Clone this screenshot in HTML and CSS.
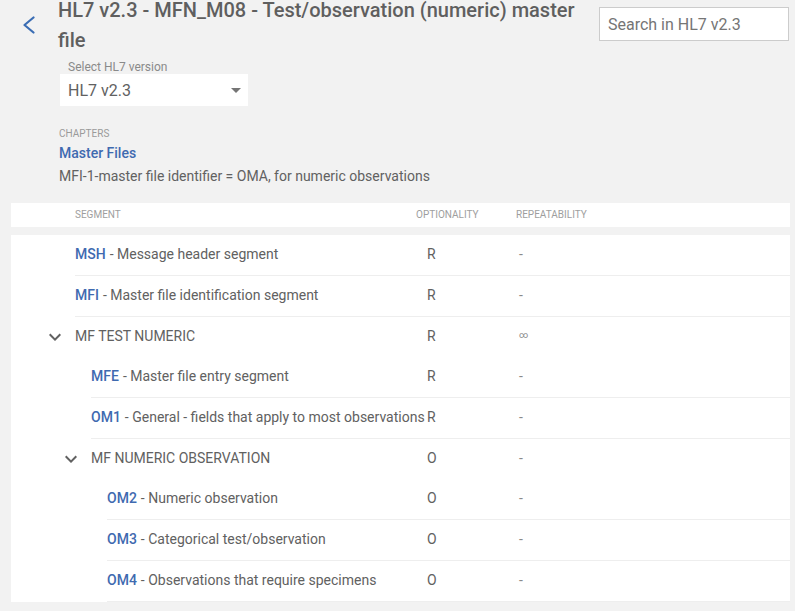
FILE: index.html
```html
<!DOCTYPE html>
<html lang="en">
<head>
<meta charset="utf-8">
<title>HL7 v2.3 - MFN_M08</title>
<link rel="stylesheet" href="styles.css">
</head>
<body>
<div class="page">
  <header class="top">
    <a class="back" href="#" aria-label="Back">
      <svg width="14" height="18" viewBox="0 0 14 18"><polyline points="11.5,1.5 2.5,9 11.5,16.5" fill="none" stroke="#3a6db4" stroke-width="2.2" stroke-linecap="round" stroke-linejoin="round"/></svg>
    </a>
    <div class="main">
      <h1 class="title">HL7 v2.3 - MFN_M08 - Test/observation (numeric) master file</h1>
      <div class="field">
        <div class="field-label">Select HL7 version</div>
        <div class="select"><span>HL7 v2.3</span><span class="caret"></span></div>
      </div>
      <div class="chapters">
        <div class="ch-label">CHAPTERS</div>
        <a class="ch-link" href="#">Master Files</a>
        <p class="desc">MFI-1-master file identifier = OMA, for numeric observations</p>
      </div>
    </div>
    <input class="search" type="text" placeholder="Search in HL7 v2.3">
  </header>

  <section class="table">
    <div class="thead">
      <div class="th seg-h">Segment</div>
      <div class="th opt-h">Optionality</div>
      <div class="th rep-h">Repeatability</div>
    </div>
    <div class="tbody">
      <div class="row leaf l0">
        <div class="seg"><a class="code" href="#">MSH</a> - Message header segment</div>
        <div class="opt">R</div><div class="rep">-</div>
      </div>
      <div class="row leaf l0">
        <div class="seg"><a class="code" href="#">MFI</a> - Master file identification segment</div>
        <div class="opt">R</div><div class="rep">-</div>
      </div>
      <div class="row group g0">
        <div class="seg"><svg class="exp" width="24" height="24" viewBox="0 0 24 24"><path d="M16.59 8.59L12 13.17 7.41 8.59 6 10l6 6 6-6z"/></svg>MF TEST NUMERIC</div>
        <div class="opt">R</div><div class="rep inf">∞</div>
      </div>
      <div class="row leaf l1">
        <div class="seg"><a class="code" href="#">MFE</a> - Master file entry segment</div>
        <div class="opt">R</div><div class="rep">-</div>
      </div>
      <div class="row leaf l1">
        <div class="seg"><a class="code" href="#">OM1</a> - General - fields that apply to most observations</div>
        <div class="opt">R</div><div class="rep">-</div>
      </div>
      <div class="row group g1">
        <div class="seg"><svg class="exp" width="24" height="24" viewBox="0 0 24 24"><path d="M16.59 8.59L12 13.17 7.41 8.59 6 10l6 6 6-6z"/></svg>MF NUMERIC OBSERVATION</div>
        <div class="opt">O</div><div class="rep">-</div>
      </div>
      <div class="row leaf l2">
        <div class="seg"><a class="code" href="#">OM2</a> - Numeric observation</div>
        <div class="opt">O</div><div class="rep">-</div>
      </div>
      <div class="row leaf l2">
        <div class="seg"><a class="code" href="#">OM3</a> - Categorical test/observation</div>
        <div class="opt">O</div><div class="rep">-</div>
      </div>
      <div class="row leaf l2">
        <div class="seg"><a class="code" href="#">OM4</a> - Observations that require specimens</div>
        <div class="opt">O</div><div class="rep">-</div>
      </div>
    </div>
  </section>
</div>
</body>
</html>
```

FILE: styles.css
```css
html, body {
  margin: 0;
  padding: 0;
  overflow: hidden;
}
body {
  background: #f2f2f2;
  font-family: Roboto, "Liberation Sans", Arial, sans-serif;
  color: #616161;
}
a { text-decoration: none; }

.top {
  display: flex;
  align-items: flex-start;
}
.back {
  flex: none;
  width: 58px;
  display: block;
}
.back svg {
  display: block;
  margin: 16px 0 0 22px;
}
.main {
  flex: 1;
  min-width: 0;
}
.title {
  margin: -5px 0 0 0;
  font-size: 20px;
  font-weight: 500;
  line-height: 30px;
  color: #5f5f5f;
}
.field {
  margin: 5px 0 0 2px;
}
.field-label {
  font-size: 12px;
  line-height: 14px;
  color: #8a8a8a;
  padding-left: 8px;
}
.select {
  width: 188px;
  height: 32px;
  box-sizing: border-box;
  background: #fff;
  display: flex;
  align-items: center;
  justify-content: space-between;
  padding: 0 6px 0 8px;
  font-size: 16px;
  color: #616161;
}
.caret {
  width: 0;
  height: 0;
  border-left: 5px solid transparent;
  border-right: 5px solid transparent;
  border-top: 5px solid #757575;
  margin-right: 1px;
}
.chapters {
  margin-top: 22px;
  padding-left: 1px;
}
.ch-label {
  font-size: 10px;
  line-height: 12px;
  color: #9a9a9a;
}
.ch-link {
  display: block;
  margin-top: 3px;
  font-size: 14px;
  line-height: 20px;
  font-weight: 500;
  color: #3f6ab0;
}
.desc {
  margin: 3px 0 0 0;
  font-size: 14px;
  line-height: 20px;
  color: #616161;
}
.search {
  flex: none;
  box-sizing: border-box;
  width: 190px;
  height: 34px;
  margin: 7px 6px 0 10px;
  border: 1px solid #cccccc;
  background: #fff;
  padding: 0 8px;
  font-family: Roboto, "Liberation Sans", Arial, sans-serif;
  font-size: 16px;
  color: #616161;
  outline: none;
}
.search::placeholder {
  color: #757575;
  opacity: 1;
}

.table {
  margin: 17px 5px 0 11px;
}
.thead {
  display: flex;
  height: 24px;
  background: #fff;
  padding-left: 64px;
}
.th {
  font-size: 10px;
  line-height: 24px;
  color: #9e9e9e;
  text-transform: uppercase;
}
.seg-h { width: 341px; flex: none; }
.opt-h { width: 100px; flex: none; }
.rep-h { flex: 1; }

.tbody {
  margin-top: 8px;
  background: #fff;
}
.row {
  display: flex;
  height: 40px;
  margin-left: var(--start);
  font-size: 14px;
  line-height: 39px;
  padding-bottom: 1px;
  box-sizing: border-box;
  white-space: nowrap;
}
.row.leaf {
  height: 41px;
  border-bottom: 1px solid #eeeeee;
}
.l0 { --start: 64px; }
.l1 { --start: 80px; }
.l2 { --start: 96px; }
.g0 { --start: 32px; }
.g1 { --start: 48px; }

.seg {
  flex: none;
  width: calc(416px - var(--start));
  display: flex;
  align-items: center;
}
.code {
  font-weight: 500;
  color: #3f6ab0;
  margin-right: 4px;
}
.exp {
  flex: none;
  fill: #616161;
  margin-right: 8px;
  margin-top: 1px;
}
.opt {
  flex: none;
  width: 92px;
}
.rep {
  flex: 1;
  color: #8a8a8a;
}
.rep.inf {
  font-size: 9px;
  color: #8a8a8a;
  line-height: 37px;
}
```
